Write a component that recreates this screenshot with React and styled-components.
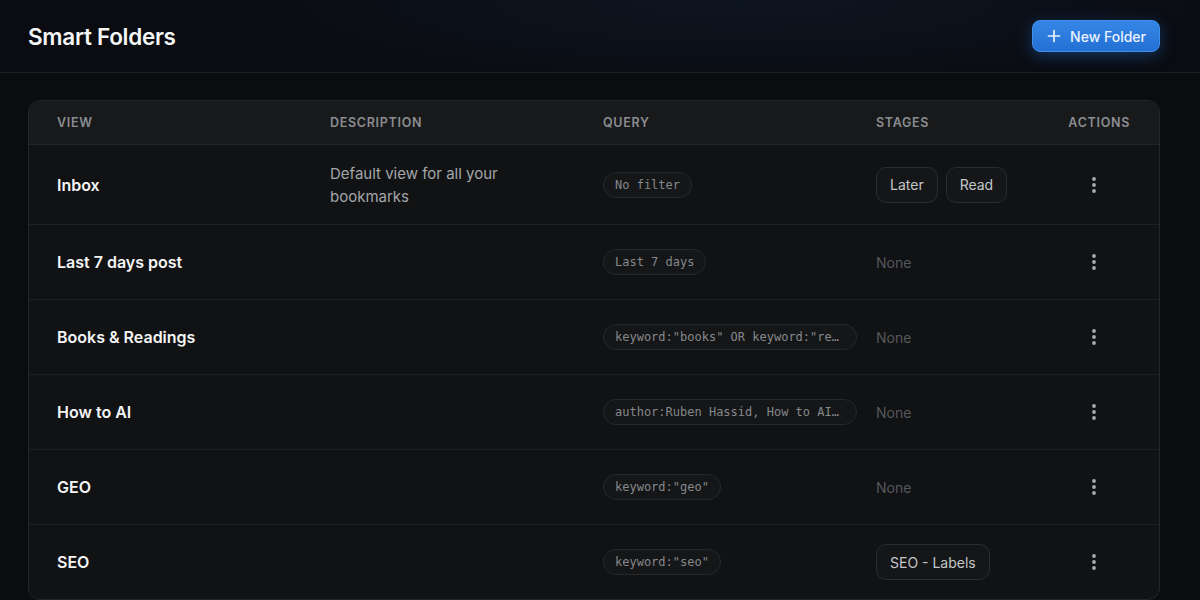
import React from "react";
import styled, { createGlobalStyle } from "styled-components";

const Global = createGlobalStyle`
  html, body { margin: 0; padding: 0; background: #0b0c0d; }
  body { font-family: Inter, "Noto Sans", sans-serif; color: #f2f2f2; -webkit-font-smoothing: antialiased; }
  * { box-sizing: border-box; }
`;

const Page = styled.div`
  min-height: 600px;
  background: #0b0c0d;
`;

const Header = styled.header`
  height: 73px;
  display: flex;
  align-items: center;
  justify-content: space-between;
  padding: 0 40px 0 28px;
  border-bottom: 1px solid #1d2024;
  background: radial-gradient(ellipse 700px 120px at 62% 0%, #0e1522 0%, #0a0c11 75%), #0a0c10;
`;

const Title = styled.h1`
  margin: 0;
  font-size: 22.5px;
  font-weight: 600;
  letter-spacing: -0.3px;
  color: #f5f6f7;
`;

const PrimaryButton = styled.button`
  display: inline-flex;
  align-items: center;
  gap: 9px;
  height: 32px;
  padding: 0 13px 0 14px;
  border: 1px solid #3d8fe8;
  border-radius: 8px;
  background: linear-gradient(180deg, #3586e6 0%, #2470d4 100%);
  color: #eaf3ff;
  font-family: inherit;
  font-size: 14px;
  font-weight: 500;
  box-shadow: 0 4px 16px rgba(40, 120, 230, 0.35);
  cursor: pointer;
`;

const Main = styled.main`
  padding: 27px 40px 0 28px;
`;

const Card = styled.div`
  background: #111213;
  border: 1px solid #232527;
  border-radius: 12px;
  overflow: hidden;
`;

const Grid = styled.div`
  display: grid;
  grid-template-columns: 273px 273px 273px 1fr 100px;
  align-items: center;
  padding: 0 28px;
  border-top: ${(p) => (p.$first ? "none" : "1px solid #1e2022")};
  min-height: ${(p) => p.$h || 75}px;
`;

const HeadRow = styled(Grid)`
  background: #18191a;
  min-height: 44px;
  border-bottom: 1px solid #232527;
`;

const HeadCell = styled.div`
  font-size: 12.5px;
  font-weight: 600;
  letter-spacing: 0.7px;
  color: #8a8d91;
  text-align: ${(p) => (p.$right ? "right" : "left")};
  padding-right: ${(p) => (p.$right ? "1px" : "0")};
`;

const Name = styled.div`
  font-size: 16px;
  font-weight: 600;
  color: #f4f5f6;
`;

const Desc = styled.div`
  font-size: 15px;
  line-height: 23px;
  color: #a3a6aa;
  padding-right: 60px;
`;

const QueryChip = styled.span`
  display: inline-block;
  width: ${(p) => (p.$clipped ? "254px" : "auto")};
  height: 26px;
  line-height: 24px;
  padding: 0 11px;
  border: 1px solid #26282a;
  border-radius: 13px;
  background: #151617;
  font-family: "DejaVu Sans Mono", "Liberation Mono", monospace;
  font-size: 12px;
  color: #85888c;
  white-space: nowrap;
  overflow: hidden;
  vertical-align: middle;
`;

const Stages = styled.div`
  display: flex;
  gap: 8px;
`;

const StageChip = styled.span`
  display: inline-flex;
  align-items: center;
  height: 36px;
  padding: 0 13px;
  border: 1px solid #2a2c2e;
  border-radius: 10px;
  background: #151617;
  font-size: 14px;
  color: #c4c6c9;
`;

const None = styled.span`
  font-size: 14px;
  color: #55585c;
`;

const ActionsCell = styled.div`
  display: flex;
  justify-content: flex-end;
  padding-right: 25px;
`;

const KebabButton = styled.button`
  width: 24px;
  height: 28px;
  display: flex;
  align-items: center;
  justify-content: center;
  background: transparent;
  border: none;
  padding: 0;
  cursor: pointer;
`;

const rows = [
  { name: "Inbox", desc: "Default view for all your bookmarks", query: "No filter", stages: ["Later", "Read"], h: 79 },
  { name: "Last 7 days post", query: "Last 7 days" },
  { name: "Books & Readings", query: 'keyword:"books" OR keyword:"re…', clipped: true },
  { name: "How to AI", query: "author:Ruben Hassid, How to AI…", clipped: true },
  { name: "GEO", query: 'keyword:"geo"' },
  { name: "SEO", query: 'keyword:"seo"', stages: ["SEO - Labels"] },
];

const Plus = () => (
  <svg width="14" height="14" viewBox="0 0 14 14" fill="none">
    <path d="M7 1.5v11M1.5 7h11" stroke="#eaf3ff" strokeWidth="1.7" strokeLinecap="round" />
  </svg>
);

const Kebab = () => (
  <svg width="6" height="18" viewBox="0 0 6 18">
    <circle cx="3" cy="3" r="1.9" fill="#a9acb0" />
    <circle cx="3" cy="9" r="1.9" fill="#a9acb0" />
    <circle cx="3" cy="15" r="1.9" fill="#a9acb0" />
  </svg>
);

export default function App() {
  return (
    <Page>
      <Global />
      <Header>
        <Title>Smart Folders</Title>
        <PrimaryButton>
          <Plus />
          New Folder
        </PrimaryButton>
      </Header>
      <Main>
        <Card>
          <HeadRow $first>
            <HeadCell>VIEW</HeadCell>
            <HeadCell>DESCRIPTION</HeadCell>
            <HeadCell>QUERY</HeadCell>
            <HeadCell>STAGES</HeadCell>
            <HeadCell $right>ACTIONS</HeadCell>
          </HeadRow>
          {rows.map((r, i) => (
            <Grid key={r.name} $first={i === 0} $h={r.h}>
              <Name>{r.name}</Name>
              <Desc>{r.desc || ""}</Desc>
              <div>
                <QueryChip $clipped={r.clipped}>{r.query}</QueryChip>
              </div>
              <div>
                {r.stages ? (
                  <Stages>
                    {r.stages.map((s) => (
                      <StageChip key={s}>{s}</StageChip>
                    ))}
                  </Stages>
                ) : (
                  <None>None</None>
                )}
              </div>
              <ActionsCell>
                <KebabButton aria-label="actions">
                  <Kebab />
                </KebabButton>
              </ActionsCell>
            </Grid>
          ))}
        </Card>
      </Main>
    </Page>
  );
}
